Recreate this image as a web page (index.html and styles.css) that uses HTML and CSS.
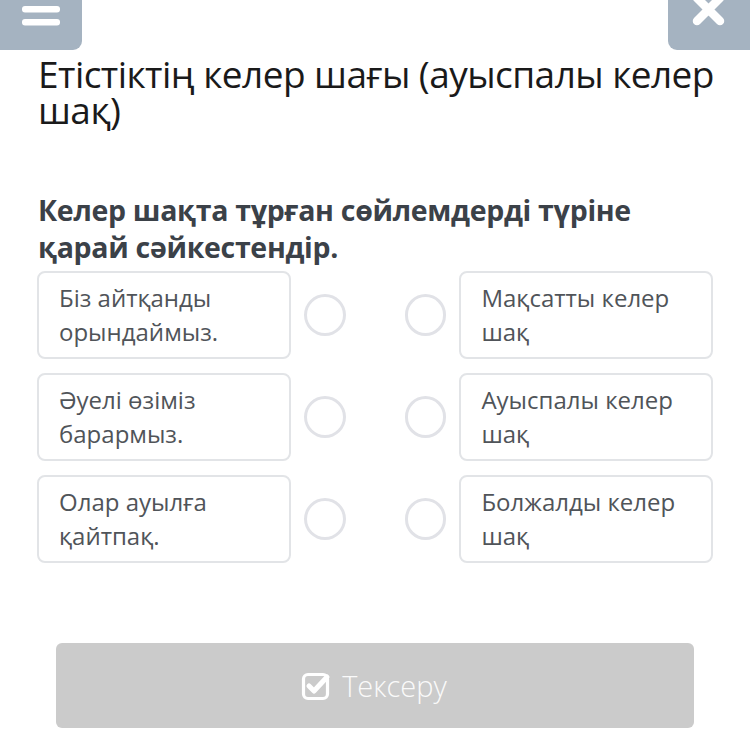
FILE: index.html
```html
<!DOCTYPE html>
<html lang="kk">
<head>
<meta charset="utf-8">
<link rel="stylesheet" href="styles.css">
</head>
<body>
<div class="topbar">
  <div class="tb-btn menu">
    <svg width="82" height="50" viewBox="0 0 82 50"><rect x="22" y="6" width="38" height="6.5" rx="3" fill="#fff"/><rect x="22" y="19" width="38" height="6.5" rx="3" fill="#fff"/></svg>
  </div>
  <div class="tb-btn close">
    <svg width="82" height="50" viewBox="0 0 82 50"><path d="M29 -2 L52 21 M52 -2 L29 21" stroke="#fff" stroke-width="8.5" stroke-linecap="round"/></svg>
  </div>
</div>
<div class="content">
  <h1 class="title">Етістіктің келер шағы (ауыспалы келер шақ)</h1>
  <p class="question">Келер шақта тұрған сөйлемдерді түріне қарай сәйкестендір.</p>
  <div class="pairs">
    <div class="row">
      <div class="card">Біз айтқанды орындаймыз.</div>
      <span class="dot left"></span>
      <span class="dot right"></span>
      <div class="card">Мақсатты келер шақ</div>
    </div>
    <div class="row">
      <div class="card">Әуелі өзіміз барармыз.</div>
      <span class="dot left"></span>
      <span class="dot right"></span>
      <div class="card">Ауыспалы келер шақ</div>
    </div>
    <div class="row">
      <div class="card">Олар ауылға қайтпақ.</div>
      <span class="dot left"></span>
      <span class="dot right"></span>
      <div class="card">Болжалды келер шақ</div>
    </div>
  </div>
  <div class="check-btn">
    <svg width="30" height="30" viewBox="0 0 30 30"><rect x="2.5" y="3.5" width="24" height="24" rx="4.5" fill="none" stroke="#fff" stroke-width="3.2"/><path d="M8 15 L13 20 L26 6" fill="none" stroke="#fff" stroke-width="5" stroke-linecap="round" stroke-linejoin="round"/></svg>
    <span>Тексеру</span>
  </div>
</div>
</body>
</html>
```
FILE: styles.css
```css
html, body {
  margin: 0;
  padding: 0;
  background: #fff;
}
body {
  width: 750px;
  height: 750px;
  overflow: hidden;
  font-family: "Open Sans", "Noto Sans", sans-serif;
}
.topbar {
  display: flex;
  justify-content: space-between;
  height: 50px;
}
.tb-btn {
  width: 82px;
  height: 50px;
  background: #a5b3c1;
}
.tb-btn svg {
  display: block;
}
.menu {
  border-bottom-right-radius: 9px;
}
.close {
  border-bottom-left-radius: 9px;
}
.content {
  padding: 0 37px;
}
.title {
  margin: 6px -30px 0 1px;
  font-weight: 400;
  font-size: 37px;
  letter-spacing: -0.55px;
  line-height: 36px;
  color: #1a1a1a;
}
.question {
  margin: 64px 0 0 1px;
  font-weight: 700;
  font-size: 28.5px;
  line-height: 37px;
  color: #3b4148;
  letter-spacing: -0.3px;
}
.pairs {
  margin-top: 5px;
  display: flex;
  flex-direction: column;
  gap: 14px;
}
.row {
  display: flex;
  align-items: center;
}
.card {
  box-sizing: border-box;
  width: 254px;
  height: 88px;
  border: 2px solid #e2e4e7;
  border-radius: 8px;
  padding: 8px 18px 0 20px;
  font-size: 24px;
  line-height: 34px;
  color: #505459;
}
.dot {
  box-sizing: border-box;
  width: 42px;
  height: 42px;
  border: 3.5px solid #e1e2e7;
  border-radius: 50%;
}
.dot.left {
  margin-left: 13px;
}
.dot.right {
  margin-left: 59px;
  margin-right: 13px;
}
.check-btn {
  margin: 80px 0 0 19px;
  width: 638px;
  height: 85px;
  border-radius: 6px;
  background: #cbcbcb;
  display: flex;
  justify-content: center;
  align-items: center;
  gap: 11px;
  color: #fafafa;
  font-size: 29px;
  font-weight: 300;
}
.check-btn svg {
  margin-left: -2px;
}
```
